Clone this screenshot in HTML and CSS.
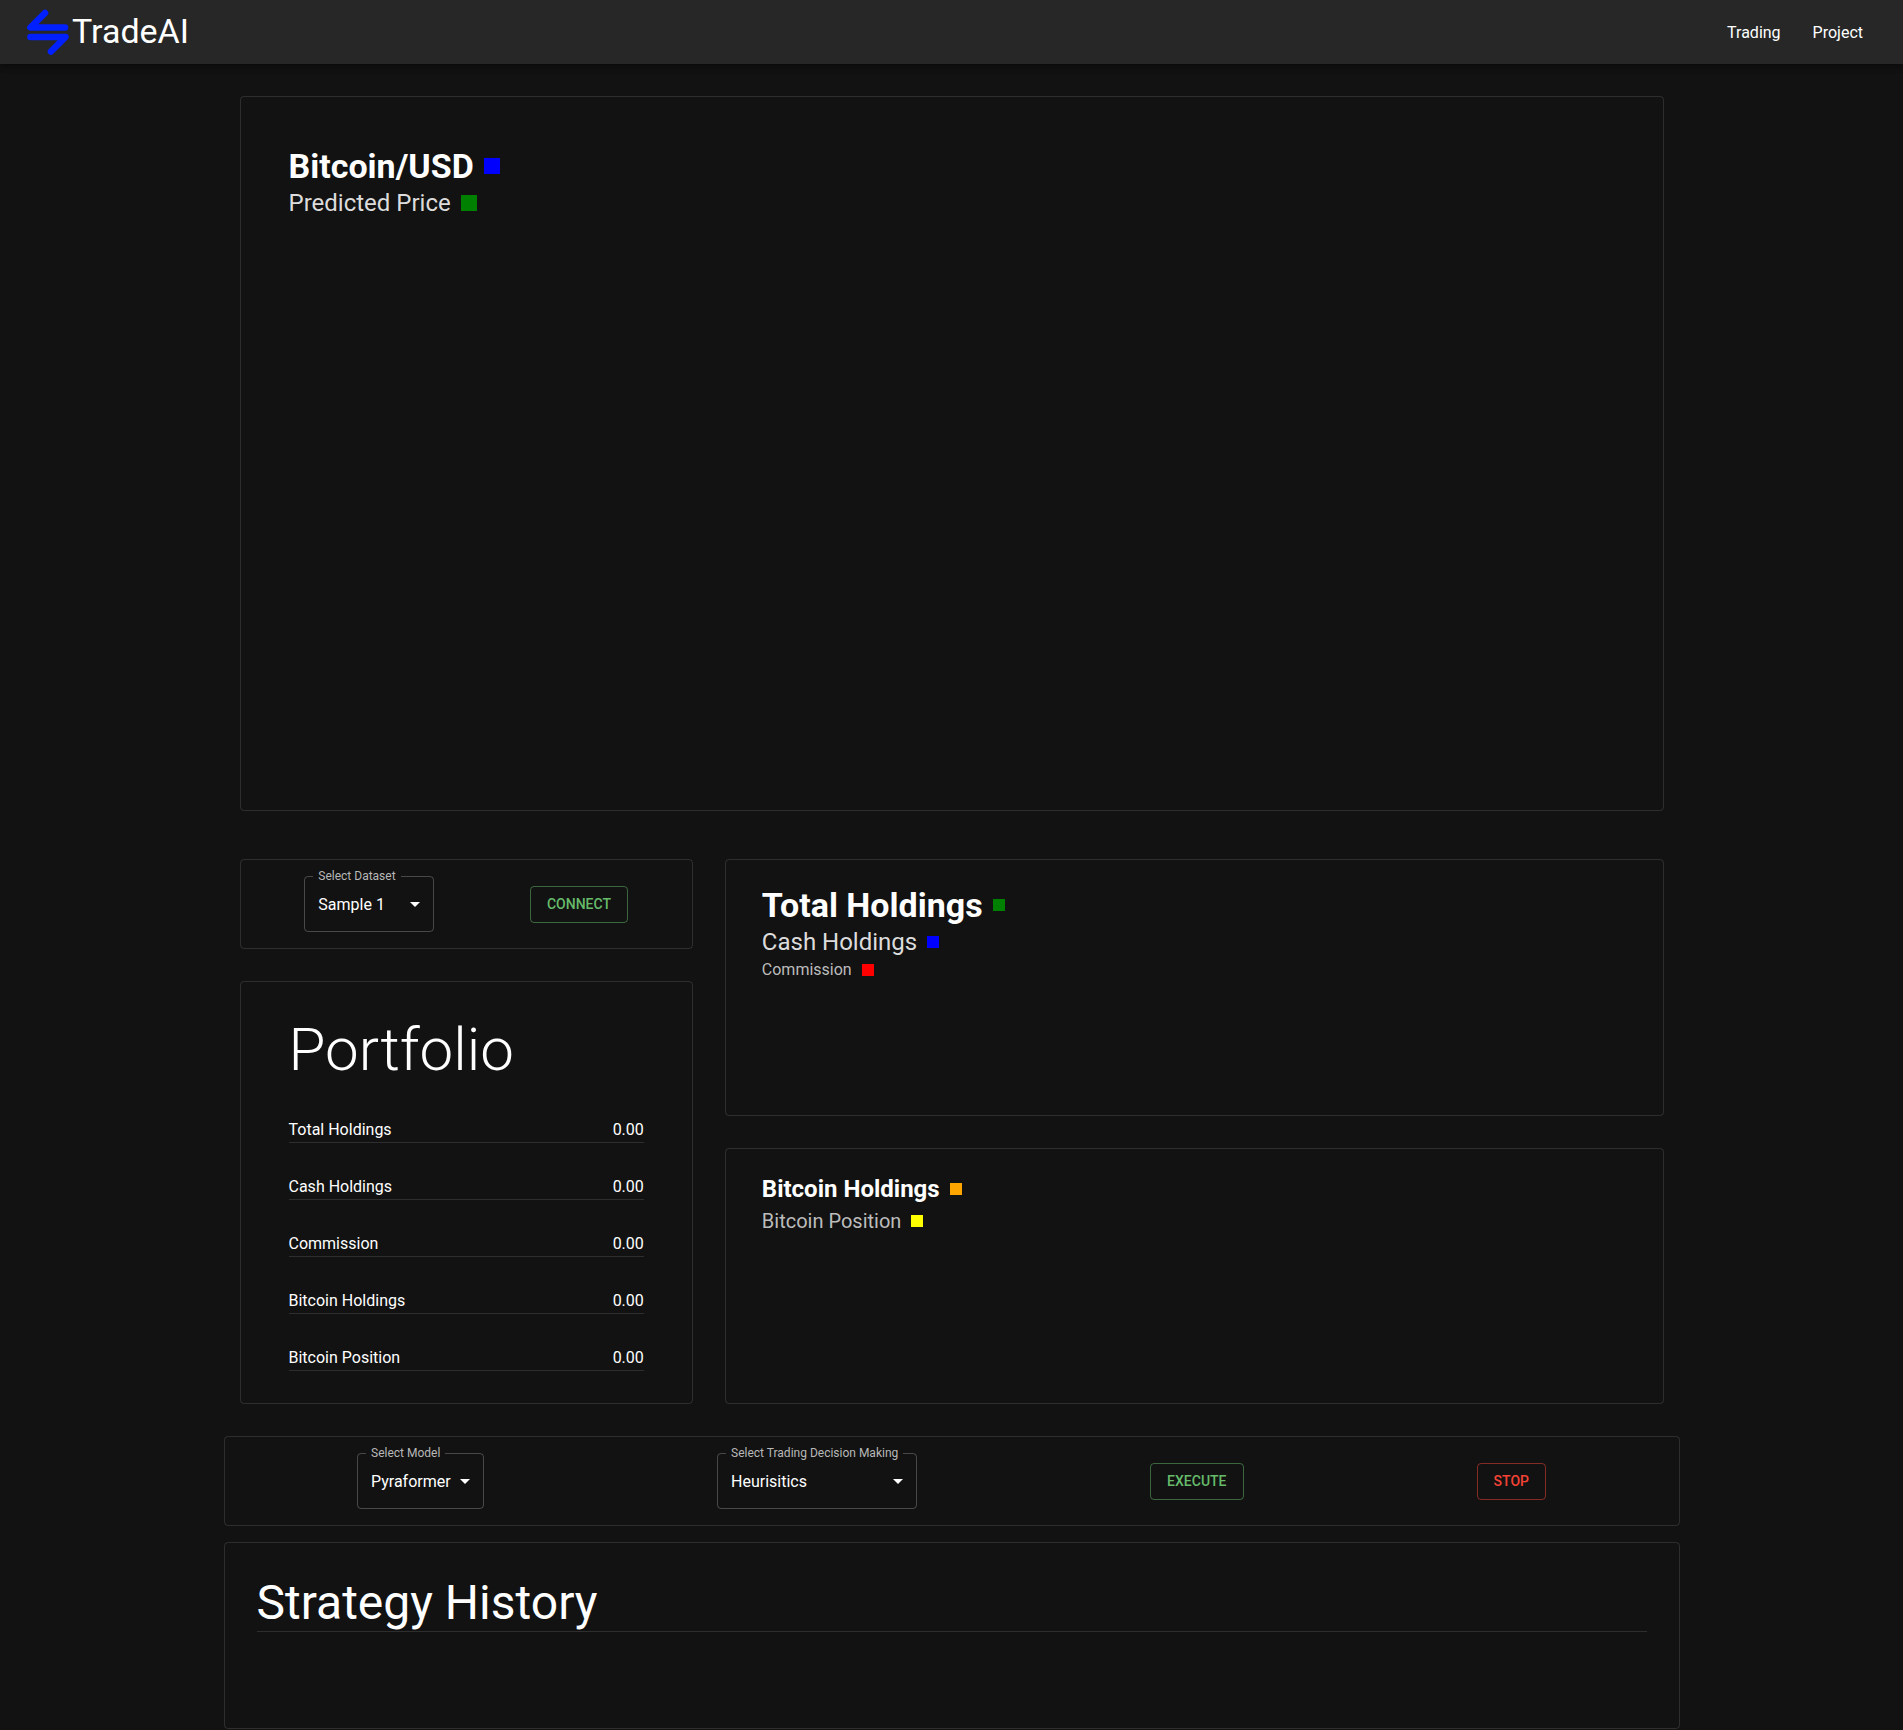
FILE: index.html
```html
<!DOCTYPE html>
<html lang="en">
<head>
<meta charset="utf-8">
<meta name="viewport" content="width=device-width, initial-scale=1">
<title>TradeAI</title>
<link rel="stylesheet" href="styles.css">
</head>
<body>
<header class="app-bar">
  <a class="brand" href="#">
    <svg class="brand-logo" viewBox="0 0 48 48" aria-hidden="true">
      <path d="M21 5 6.500 19.500H41M6.500 29H41.500L27 43.500" fill="none" stroke="#0020ff" stroke-width="6.600" stroke-linecap="round" stroke-linejoin="round"/>
    </svg>
    <span>TradeAI</span>
  </a>
  <nav class="nav">
    <a href="#trading">Trading</a>
    <a href="#project">Project</a>
  </nav>
</header>

<main class="container">
  <div class="dashboard">
    <section class="card price-card">
      <h1 class="legend legend-xl strong">Bitcoin/USD <span class="swatch large blue"></span></h1>
      <p class="legend legend-lg soft">Predicted Price <span class="swatch large green"></span></p>
      <div class="price-chart"></div>
    </section>

    <div class="columns">
      <div class="column">
        <section class="card controls">
          <div class="field field-dataset">
            <label for="dataset">Select Dataset</label>
            <select id="dataset"><option>Sample 1</option></select>
            <svg class="caret" viewBox="0 0 24 24" aria-hidden="true"><path d="M7 10l5 5 5-5z" fill="#fff"/></svg>
          </div>
          <button class="button success" type="button">CONNECT</button>
        </section>

        <section class="card portfolio">
          <h2>Portfolio</h2>
          <table>
            <tbody>
              <tr><th scope="row">Total Holdings</th><td>0.00</td></tr>
              <tr><th scope="row">Cash Holdings</th><td>0.00</td></tr>
              <tr><th scope="row">Commission</th><td>0.00</td></tr>
              <tr><th scope="row">Bitcoin Holdings</th><td>0.00</td></tr>
              <tr><th scope="row">Bitcoin Position</th><td>0.00</td></tr>
            </tbody>
          </table>
        </section>
      </div>

      <div class="column">
        <section class="card holdings-card">
          <h2 class="legend legend-xl strong">Total Holdings <span class="swatch green"></span></h2>
          <p class="legend legend-lg soft">Cash Holdings <span class="swatch blue"></span></p>
          <p class="legend legend-sm softer">Commission <span class="swatch red"></span></p>
        </section>
        <section class="card holdings-card">
          <h2 class="legend legend-lg strong">Bitcoin Holdings <span class="swatch orange"></span></h2>
          <p class="legend legend-md softer">Bitcoin Position <span class="swatch yellow"></span></p>
        </section>
      </div>
    </div>
  </div>

  <section class="card controls">
    <div class="field field-model">
      <label for="model">Select Model</label>
      <select id="model"><option>Pyraformer</option></select>
      <svg class="caret" viewBox="0 0 24 24" aria-hidden="true"><path d="M7 10l5 5 5-5z" fill="#fff"/></svg>
    </div>
    <div class="field field-decision">
      <label for="decision">Select Trading Decision Making</label>
      <select id="decision"><option>Heurisitics</option></select>
      <svg class="caret" viewBox="0 0 24 24" aria-hidden="true"><path d="M7 10l5 5 5-5z" fill="#fff"/></svg>
    </div>
    <button class="button success" type="button">EXECUTE</button>
    <button class="button danger" type="button">STOP</button>
  </section>

  <section class="card history">
    <h2>Strategy History</h2>
  </section>
</main>
</body>
</html>
```
FILE: styles.css
```css
* {
  box-sizing: border-box;
}

body {
  margin: 0;
  background: #121212;
  color: #fff;
  font: 400 16px/24px Roboto, "Liberation Sans", sans-serif;
}

h1, h2, p {
  margin: 0;
}

a {
  color: inherit;
  text-decoration: none;
}

/* Top bar */
.app-bar {
  display: flex;
  align-items: center;
  justify-content: space-between;
  height: 64px;
  padding: 0 40px 0 24px;
  background: #272727;
  box-shadow: 0 2px 4px -1px rgba(0, 0, 0, .2), 0 4px 5px rgba(0, 0, 0, .14), 0 1px 10px rgba(0, 0, 0, .12);
}

.brand {
  display: flex;
  align-items: center;
  font-size: 34px;
  line-height: 42px;
}

.brand span {
  padding-bottom: 2px;
}

.brand-logo {
  width: 48px;
  height: 48px;
}

.nav {
  display: flex;
  gap: 32px;
  padding-top: 2px;
}

/* Page structure */
.container {
  display: flex;
  flex-direction: column;
  gap: 16px;
  max-width: 1488px;
  margin: 0 auto;
  padding: 32px 16px 0;
}

.dashboard {
  display: flex;
  flex-direction: column;
  gap: 48px;
  padding: 0 16px 16px;
}

.columns {
  display: grid;
  grid-template-columns: calc((100% + 32px) / 3 - 32px) 1fr;
  gap: 32px;
}

.column {
  display: flex;
  flex-direction: column;
  gap: 32px;
}

.card {
  border: 1px solid rgba(255, 255, 255, .12);
  border-radius: 4px;
}

/* Chart legends */
.price-card {
  padding: 48px;
}

.price-chart {
  height: 543px;
}

.holdings-card {
  flex: 1;
  padding: 24px 36px;
}

.legend {
  display: flex;
  align-items: center;
  gap: 10px;
  font-weight: 400;
}

.legend-xl { font-size: 34px; line-height: 42px; }
.legend-lg { font-size: 24px; line-height: 32px; }
.legend-md { font-size: 20px; line-height: 32px; }
.legend-sm { font-size: 16px; line-height: 24px; }

.strong { font-weight: 700; }
.soft { color: #dcdcdc; }
.softer { color: #bcbcbc; }

.swatch {
  width: 12px;
  height: 12px;
}

.swatch.large {
  width: 16px;
  height: 16px;
}

.blue { background: blue; }
.green { background: green; }
.red { background: red; }
.orange { background: orange; }
.yellow { background: yellow; }

/* Control rows */
.controls {
  display: flex;
  align-items: center;
  justify-content: space-around;
  padding: 16px;
}

.field {
  position: relative;
  height: 56px;
}

.field-dataset { width: 130px; }
.field-model { width: 127px; }
.field-decision { width: 200px; }

.field label {
  position: absolute;
  top: -8px;
  left: 9px;
  padding: 0 5px;
  background: #121212;
  color: #b8b8b8;
  font-size: 12px;
  line-height: 16px;
  white-space: nowrap;
}

.field select {
  width: 100%;
  height: 100%;
  padding: 1px 31px 0 13px;
  border: 1px solid rgba(255, 255, 255, .23);
  border-radius: 4px;
  appearance: none;
  background: transparent;
  color: inherit;
  font: inherit;
}

.field option {
  background: #272727;
}

.caret {
  position: absolute;
  top: 16px;
  right: 7px;
  width: 24px;
  height: 24px;
  pointer-events: none;
}

.button {
  padding: 5px 16px;
  border: 1px solid;
  border-radius: 4px;
  background: transparent;
  font: 500 14px/25px Roboto, "Liberation Sans", sans-serif;
  cursor: pointer;
}

.success {
  border-color: rgba(102, 187, 106, .5);
  color: #66bb6a;
}

.danger {
  border-color: rgba(244, 67, 54, .5);
  color: #f44336;
}

/* Portfolio */
.portfolio {
  padding: 32px 48px;
}

.portfolio h2 {
  font-size: 60px;
  font-weight: 300;
  line-height: 72px;
}

.portfolio table {
  width: 100%;
  border-spacing: 0;
}

.portfolio th,
.portfolio td {
  padding: 32px 0 0;
  border-bottom: 1px solid rgba(255, 255, 255, .12);
  font-weight: 400;
  text-align: left;
}

.portfolio td {
  text-align: right;
}

/* Strategy history */
.history {
  padding: 32px 32px 96px;
}

.history h2 {
  border-bottom: 1px solid rgba(255, 255, 255, .12);
  font-size: 48px;
  font-weight: 400;
  line-height: 56px;
}
```
